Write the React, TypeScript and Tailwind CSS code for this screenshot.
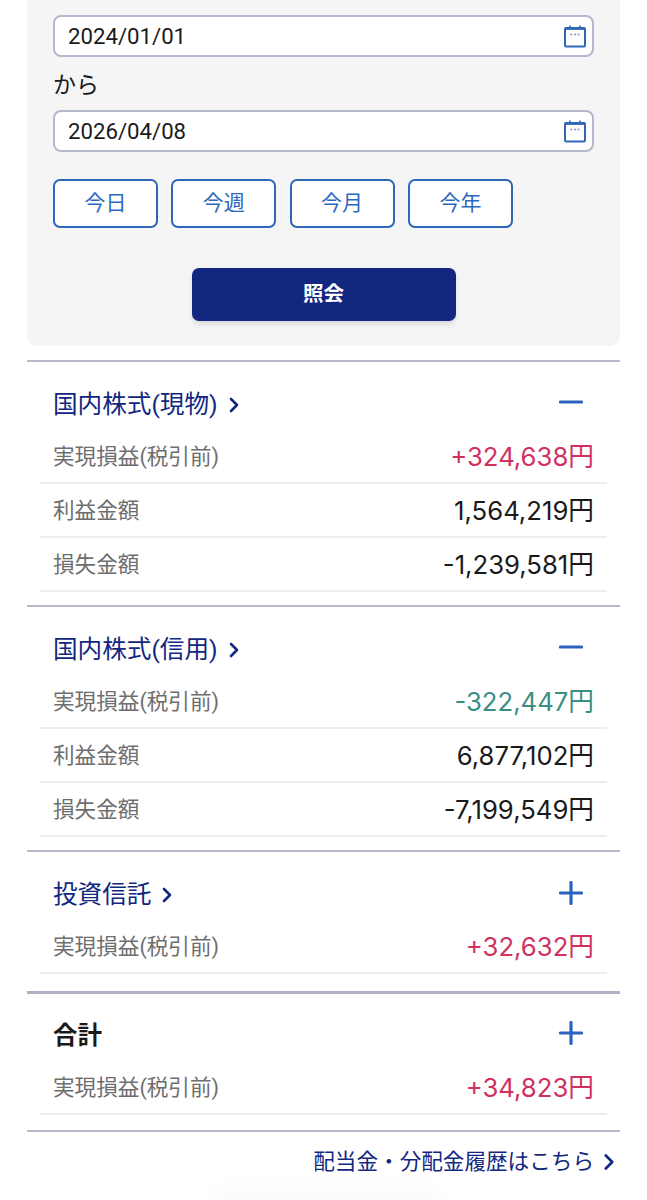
import React from "react";
import { ChevronRight } from "lucide-react";

type Row = { label: string; value: string; color?: string };
type Section = { title: string; open: boolean; rows: Row[]; last?: boolean };

const PINK = "text-[#d0315f]";
const GREEN = "text-[#3b8f84]";

const sections: Section[] = [
  {
    title: "国内株式(現物)",
    open: true,
    rows: [
      { label: "実現損益(税引前)", value: "+324,638円", color: PINK },
      { label: "利益金額", value: "1,564,219円" },
      { label: "損失金額", value: "-1,239,581円" },
    ],
  },
  {
    title: "国内株式(信用)",
    open: true,
    rows: [
      { label: "実現損益(税引前)", value: "-322,447円", color: GREEN },
      { label: "利益金額", value: "6,877,102円" },
      { label: "損失金額", value: "-7,199,549円" },
    ],
  },
  {
    title: "投資信託",
    open: false,
    last: true,
    rows: [{ label: "実現損益(税引前)", value: "+32,632円", color: PINK }],
  },
];

function CalendarIcon() {
  return (
    <svg width="24" height="24" viewBox="0 0 24 24" fill="none" stroke="#2f66b8" strokeWidth="2">
      <rect x="2" y="4" width="20" height="18.5" rx="1" />
      <path d="M2 4.6h20" strokeWidth="2.6" />
      <path d="M7 1.4v3M17 1.4v3" strokeWidth="1.6" />
      <path d="M7.5 10.5h1.8M11.1 10.5h1.8M14.7 10.5h1.8" strokeWidth="1.5" stroke="#6c8fc6" />
    </svg>
  );
}

function DateField({ value }: { value: string }) {
  return (
    <div className="flex h-[42px] items-center justify-between rounded-[8px] border-2 border-[#b3b8cc] bg-white pl-[13px] pr-[5px]">
      <span className="pt-[2px] text-[22.2px] text-[#1a1a1a]">{value}</span>
      <CalendarIcon />
    </div>
  );
}

function Toggle({ open }: { open: boolean }) {
  return (
    <svg
      width="24"
      height="24"
      viewBox="0 0 24 24"
      stroke="#2a62bd"
      strokeWidth="3.2"
      strokeLinecap="round"
      className="-mt-[6px] mr-[37px]"
    >
      <path d="M1.5 12h21" />
      {!open && <path d="M12 1.5v21" />}
    </svg>
  );
}

function ResultRow({ label, value, color }: Row) {
  return (
    <div className="mx-[13px] flex h-[54px] items-center justify-between border-b-2 border-[#ecedf2] px-[13px] pt-[3px]">
      <span className="text-[21.6px] text-[#6e6e6e]">{label}</span>
      <span className={`font-['Inter','Noto_Sans_CJK_JP',sans-serif] text-[25.7px] ${color ?? "text-[#1a1a1a]"}`}>
        {value}
      </span>
    </div>
  );
}

function ResultSection({ section }: { section: Section }) {
  return (
    <section className={`border-t-2 border-[#b5b7cb] ${section.last ? "pb-[17px]" : "pb-[13.25px]"}`}>
      <div className="flex h-[70px] items-center justify-between pl-[26px] pt-[17px]">
        <div className="flex items-center gap-[4px] text-[24.6px] text-[#12277f]">
          <span>{section.title}</span>
          <ChevronRight size={24} strokeWidth={2.6} />
        </div>
        <Toggle open={section.open} />
      </div>
      <div className="-mt-[2px]">
        {section.rows.map((row) => (
          <ResultRow key={row.label} {...row} />
        ))}
      </div>
    </section>
  );
}

export default function App() {
  return (
    <div className="relative h-[1200px] w-[647px] overflow-hidden bg-white font-['Roboto','Noto_Sans_CJK_JP',sans-serif]">
      <div className="mx-[27px]">
        {/* Search panel */}
        <div className="rounded-b-[10px] bg-[#f5f5f6] px-[26px] pb-[25px] pt-[15px]">
          <DateField value="2024/01/01" />
          <p className="mb-[9px] mt-[14px] h-[30px] text-[23px] leading-[30px] text-[#1a1a1a]">から</p>
          <DateField value="2026/04/08" />
          <div className="mt-[27px] flex gap-[13.3px]">
            {["今日", "今週", "今月", "今年"].map((t) => (
              <button
                key={t}
                className="h-[49px] w-[105px] rounded-[7px] border-2 border-[#2f66b8] bg-white text-[21px] text-[#2c68c0]"
              >
                {t}
              </button>
            ))}
          </div>
          <div className="mt-[40px] flex justify-center">
            <button className="h-[53px] w-[264px] rounded-[7px] bg-[#12277f] pb-[1px] text-[20.5px] font-bold text-white shadow-md">
              照会
            </button>
          </div>
        </div>

        {/* Results */}
        <div className="mt-[13.5px]">
          {sections.map((s) => (
            <ResultSection key={s.title} section={s} />
          ))}
          <section className="border-t-[3px] border-[#aeb0c4] pb-[15.5px]">
            <div className="flex h-[68.5px] items-center justify-between pl-[26px] pt-[15.5px]">
              <span className="text-[24.5px] font-bold text-[#1a1a1a]">合計</span>
              <Toggle open={false} />
            </div>
            <div className="-mt-[2px]">
              <ResultRow label="実現損益(税引前)" value="+34,823円" color={PINK} />
            </div>
          </section>
          <div className="flex items-center justify-end gap-[1.6px] border-t-2 border-[#b5b7cb] pt-[14px] text-[21.6px] text-[#12277f]">
            <span>配当金・分配金履歴はこちら</span>
            <ChevronRight size={26} strokeWidth={2.4} className="-mr-[1.6px]" />
          </div>
        </div>
      </div>
      {/* faint shadow of the floating bar cut off at the bottom edge */}
      <div className="absolute bottom-0 left-[210px] h-[10px] w-[230px] rounded-t-full bg-[#f8f8f8] blur-sm" />
    </div>
  );
}
